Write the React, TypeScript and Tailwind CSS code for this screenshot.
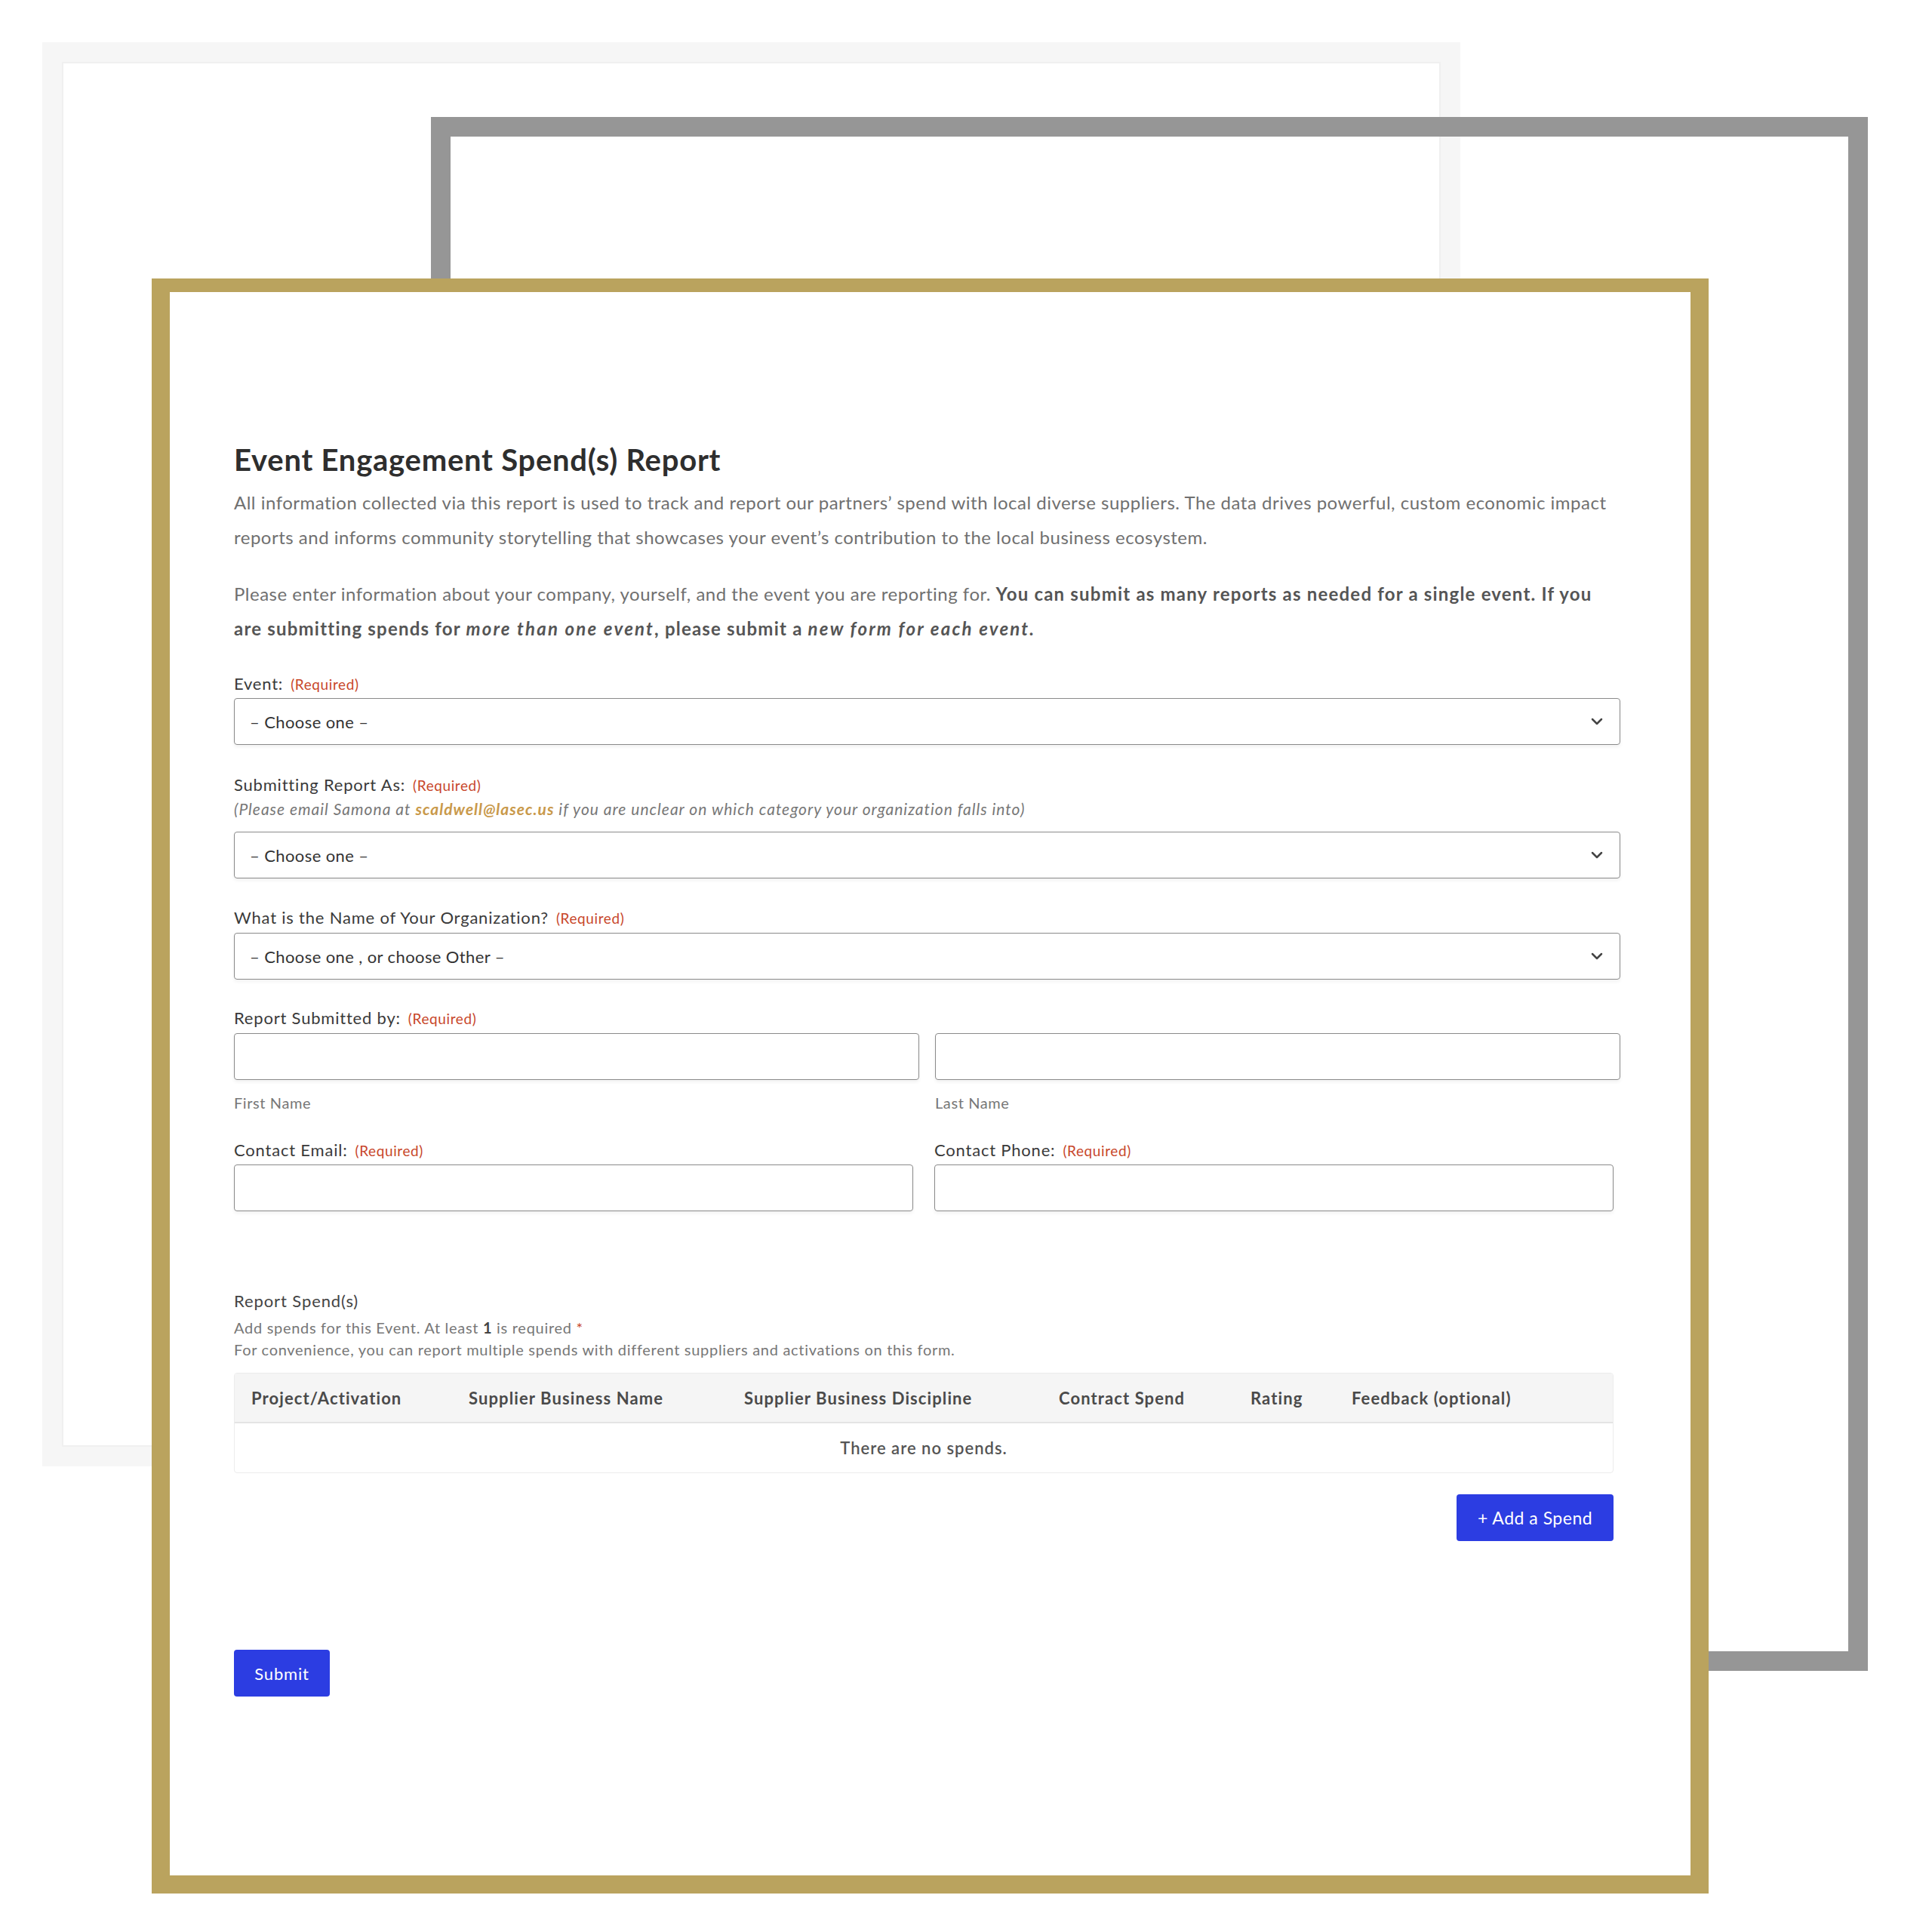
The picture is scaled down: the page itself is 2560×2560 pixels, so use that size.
import { ChevronDown } from "lucide-react";

const font = "font-['Lato','Liberation_Sans',sans-serif]";

function Required() {
  return <span className="ml-[10px] text-[19px] tracking-[0.6px] text-[#c8472b]">(Required)</span>;
}

function Label({ children }: { children: React.ReactNode }) {
  return (
    <div className="text-[22px] leading-[30px] tracking-[0.8px] text-[#3a3a3a]">
      {children}
      <Required />
    </div>
  );
}

function SelectBox({ text }: { text: string }) {
  return (
    <div className="flex h-[62px] w-full items-center justify-between rounded-[4px] border-[1.5px] border-[#8a8a8a] pl-[20px] pr-[18px] shadow-[0_3px_4px_rgba(0,0,0,0.05)]">
      <span className="text-[22px] tracking-[0.4px] text-[#333]">{text}</span>
      <ChevronDown size={24} strokeWidth={2.5} className="text-[#444]" />
    </div>
  );
}

function InputBox({ className = "" }: { className?: string }) {
  return (
    <div
      className={`h-[62px] rounded-[4px] border-[1.5px] border-[#8a8a8a] shadow-[0_3px_4px_rgba(0,0,0,0.05)] ${className}`}
    />
  );
}

export default function App() {
  return (
    <div className={`relative h-[2560px] w-[2560px] overflow-hidden bg-white ${font}`}>
      {/* back frames */}
      <div className="absolute left-[56px] top-[56px] h-[1887px] w-[1879px] border-[26px] border-[#f6f6f6]">
        <div className="h-full w-full border-[2px] border-[#f0f0f0]" />
      </div>
      <div className="absolute left-[571px] top-[155px] h-[2059px] w-[1904px] border-[26px] border-[#969696]" />

      {/* gold card */}
      <div className="absolute left-[201px] top-[369px] h-[2140px] w-[2063px] border-[24px] border-t-[18px] border-[#baa35e] bg-white">
        <div className="flex flex-col pl-[85px] pr-[93px] pt-[199px]">
          <h1 className="text-[40px] font-bold leading-[46px] tracking-[0.75px] text-[#2e2e2e]">
            Event Engagement Spend(s) Report
          </h1>

          <p className="mt-[11px] text-[24px] leading-[46px] tracking-[0.5px] text-[#707070]">
            All information collected via this report is used to track and report our partners’ spend with local diverse suppliers. The data drives powerful, custom economic impact
            <br />
            reports and informs community storytelling that showcases your event’s contribution to the local business ecosystem.
          </p>

          <p className="mt-[29px] whitespace-nowrap text-[24px] leading-[46px] tracking-[0.5px] text-[#707070]">
            Please enter information about your company, yourself, and the event you are reporting for.{" "}
            <strong className="font-bold tracking-[1.2px] text-[#555]">
              You can submit as many reports as needed for a single event. If you
              <br />
              are submitting spends for <em className="tracking-[2.2px]">more than one event</em>, please submit a{" "}
              <em className="tracking-[2.2px]">new form for each event.</em>
            </strong>
          </p>

          <div className="mt-[35px]">
            <Label>Event:</Label>
            <div className="mt-[3px]">
              <SelectBox text="– Choose one –" />
            </div>
          </div>

          <div className="mt-[38px]">
            <Label>Submitting Report As:</Label>
            <div className="mt-[2px] text-[21px] italic leading-[28px] tracking-[1px] text-[#777]">
              (Please email Samona at{" "}
              <span className="font-bold text-[#c9994b]">scaldwell@lasec.us</span> if you are unclear on which category your organization falls into)
            </div>
            <div className="mt-[16px]">
              <SelectBox text="– Choose one –" />
            </div>
          </div>

          <div className="mt-[37px]">
            <Label>What is the Name of Your Organization?</Label>
            <div className="mt-[4px]">
              <SelectBox text="– Choose one , or choose Other –" />
            </div>
          </div>

          <div className="mt-[36px]">
            <Label>Report Submitted by:</Label>
            <div className="mt-[4px] grid grid-cols-2 gap-x-[21px]">
              <div>
                <InputBox />
                <div className="mt-[16px] text-[20px] leading-[28px] tracking-[0.6px] text-[#777]">First Name</div>
              </div>
              <div>
                <InputBox />
                <div className="mt-[16px] text-[20px] leading-[28px] tracking-[0.6px] text-[#777]">Last Name</div>
              </div>
            </div>
          </div>

          <div className="mt-[34px] grid w-[1828px] grid-cols-2 gap-x-[28px]">
            <div>
              <Label>Contact Email:</Label>
              <InputBox className="mt-[3px]" />
            </div>
            <div>
              <Label>Contact Phone:</Label>
              <InputBox className="mt-[3px]" />
            </div>
          </div>

          <div className="mt-[104px] w-[1828px]">
            <div className="text-[22px] leading-[30px] tracking-[0.9px] text-[#444]">Report Spend(s)</div>
            <div className="mt-[6px] text-[20px] leading-[29px] tracking-[0.7px] text-[#777]">
              Add spends for this Event. At least <span className="font-bold text-[#444]">1</span> is required{" "}
              <span className="text-[#c8472b]">*</span>
            </div>
            <div className="text-[20px] leading-[29px] tracking-[0.7px] text-[#777]">
              For convenience, you can report multiple spends with different suppliers and activations on this form.
            </div>

            <div className="mt-[16px] overflow-hidden rounded-[4px] border border-[#ececec]">
              <div className="grid h-[66px] grid-cols-[288px_365px_417px_254px_134px_1fr] items-center border-b-[2px] border-[#e4e4e4] bg-[#f5f5f5] pl-[22px] text-[22px] font-bold tracking-[1.1px] text-[#4a4a4a]">
                <span>Project/Activation</span>
                <span>Supplier Business Name</span>
                <span>Supplier Business Discipline</span>
                <span>Contract Spend</span>
                <span>Rating</span>
                <span>Feedback (optional)</span>
              </div>
              <div className="flex h-[65px] items-center justify-center text-[22px] font-semibold tracking-[1px] text-[#555]">
                There are no spends.
              </div>
            </div>

            <div className="mt-[28px] flex justify-end">
              <button className="h-[62px] w-[208px] rounded-[4px] bg-[#2c3de2] text-[23px] tracking-[0.5px] text-white">
                + Add a Spend
              </button>
            </div>
          </div>

          <div className="mt-[144px]">
            <button className="h-[62px] w-[127px] rounded-[4px] bg-[#2c3de2] text-[22px] tracking-[0.8px] text-white">
              Submit
            </button>
          </div>
        </div>
      </div>
    </div>
  );
}
